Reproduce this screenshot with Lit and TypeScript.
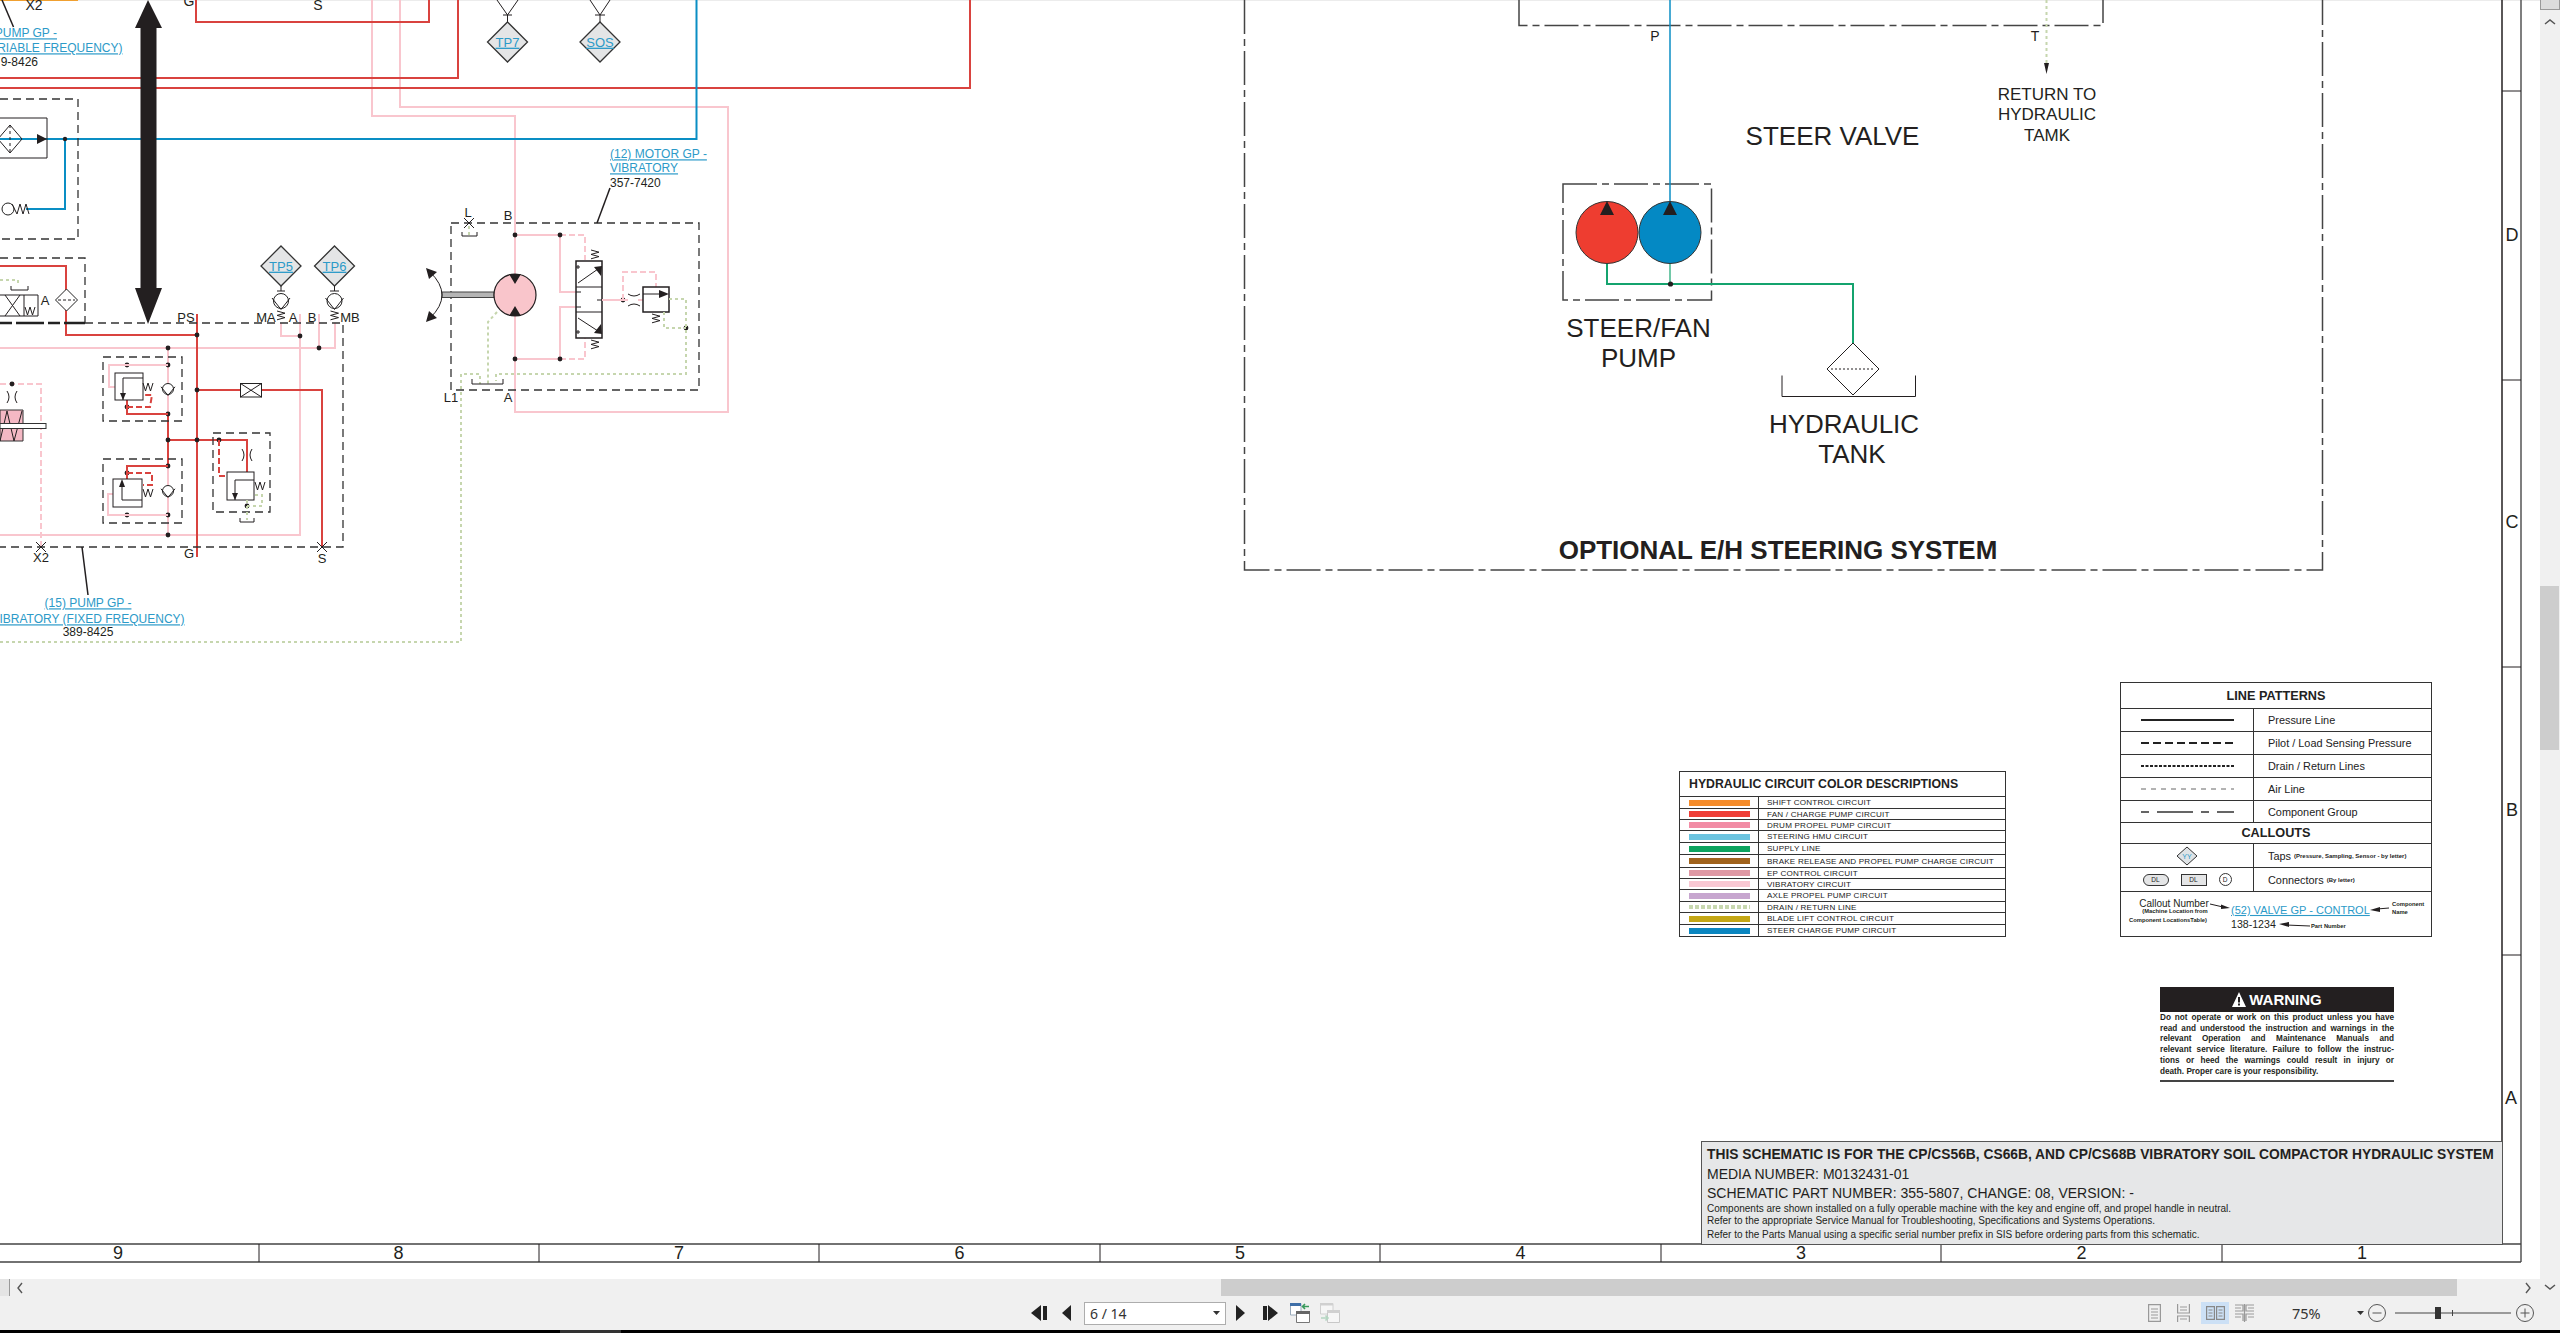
import { LitElement, html, svg, css } from 'lit';
import { customElement } from 'lit/decorators.js';

const COLORS = [
  { c: '#f58c2a', t: 'SHIFT CONTROL CIRCUIT', h: 12 },
  { c: '#ee3d36', t: 'FAN / CHARGE PUMP CIRCUIT', h: 11 },
  { c: '#f28ca5', t: 'DRUM PROPEL PUMP CIRCUIT', h: 11 },
  { c: '#6cc4e0', t: 'STEERING HMU CIRCUIT', h: 12 },
  { c: '#0da45f', t: 'SUPPLY LINE', h: 12 },
  { c: '#a0631c', t: 'BRAKE RELEASE AND PROPEL PUMP CHARGE CIRCUIT', h: 13 },
  { c: '#df98a4', t: 'EP CONTROL CIRCUIT', h: 11 },
  { c: '#f9c8d3', t: 'VIBRATORY CIRCUIT', h: 11 },
  { c: '#c7a6cf', t: 'AXLE PROPEL PUMP CIRCUIT', h: 12 },
  { c: 'dots', t: 'DRAIN / RETURN LINE', h: 11 },
  { c: '#c4a715', t: 'BLADE LIFT CONTROL CIRCUIT', h: 12 },
  { c: '#0a86c0', t: 'STEER CHARGE PUMP CIRCUIT', h: 11 },
];

const PATTERNS = [
  { label: 'Pressure Line', w: 2, dash: '', col: '#222' },
  { label: 'Pilot / Load Sensing Pressure', w: 2, dash: '8 4', col: '#222' },
  { label: 'Drain / Return Lines', w: 2, dash: '3 1.5', col: '#222' },
  { label: 'Air Line', w: 1, dash: '5 5', col: '#666' },
  { label: 'Component Group', w: 1.4, dash: '8 8 36 8 8 8 36 0', col: '#333' },
];

// text centred vertically on y, x is the anchor
const t = (x: number, y: number, s: string, size = 14, anchor = 'middle', cls = 'lb') =>
  svg`<text class=${cls} x=${x} y=${y + size * 0.36} font-size=${size} text-anchor=${anchor}>${s}</text>`;

const dots = (pts: number[][]) => pts.map(([x, y]) => svg`<circle class="dot" cx=${x} cy=${y} r="2.4"></circle>`);

const cross = (x: number, y: number, r = 5) =>
  svg`<path class="k" d="M${x - r} ${y - r}L${x + r} ${y + r}M${x + r} ${y - r}L${x - r} ${y + r}"></path>`;

// horizontal spring, looks like a small W
const springH = (x: number, y: number) =>
  svg`<path class="k" d="M${x} ${y - 4}l2.5 8l2.5 -8l2.5 8l2.5 -8"></path>`;
const springV = (x: number, y: number) =>
  svg`<path class="k" d="M${x - 4} ${y}l8 2.2l-8 2.2l8 2.2l-8 2.2"></path>`;

const checkValve = (x: number, y: number, r = 5.5) => svg`
  <circle cx=${x} cy=${y} r=${r} fill="#fff" stroke="#222" stroke-width="1"></circle>
  <path class="k" d="M${x - r - 1.5} ${y - r * 0.4}L${x} ${y + r + 1}L${x + r + 1.5} ${y - r * 0.4}"></path>`;

const tap = (x: number, y: number, label: string) => svg`
  <path d="M${x} ${y - 20}L${x + 20} ${y}L${x} ${y + 20}L${x - 20} ${y}Z" fill="#e4e5e6" stroke="#333" stroke-width="1.3"></path>
  ${t(x, y, label, 13, 'middle', 'lk ul')}`;

const orifice = (x: number, y: number) => svg`
  <path class="k" d="M${x - 5} ${y - 6}Q${x - 1} ${y} ${x - 5} ${y + 6}M${x + 5} ${y - 6}Q${x + 1} ${y} ${x + 5} ${y + 6}"></path>`;

@customElement('app-root')
export class AppRoot extends LitElement {
  static styles = css`
    :host {
      display: flex;
      flex-direction: column;
      width: 2560px;
      height: 1333px;
      overflow: hidden;
      background: #fff;
      font-family: 'Liberation Sans', Arial, sans-serif;
      color: #222;
    }

    .viewer {
      flex: 1;
      min-height: 0;
      display: grid;
      grid-template-columns: 1fr 20px;
      grid-template-rows: 1fr 17px;
    }

    .canvas { position: relative; overflow: hidden; background: #fff; }
    .canvas > svg { display: block; position: absolute; left: 0; top: 0; }

    .vbar {
      grid-row: 1 / span 2;
      grid-column: 2;
      background: #f0f0f0;
      display: flex;
      flex-direction: column;
      align-items: center;
    }
    .vbar .cap { width: 20px; height: 10px; box-sizing: border-box; background: #dcdcdc; border: 1px solid #999; border-top: 0; }
    .vbar .thumb { width: 19px; height: 164px; background: #cdcdcd; margin-top: 559px; margin-left: -1px; }
    .vbar .up { margin-top: 7px; height: 10px; }
    .vbar .down { margin-top: auto; margin-bottom: 4px; height: 10px; }

    .hbar { background: #f0f0f0; display: flex; align-items: center; }
    .hbar .cap { width: 10px; height: 18px; box-sizing: border-box; background: #e4e4e4; border-right: 1px solid #999; }
    .hbar .left { margin-left: 6px; }
    .hbar .thumb { width: 1236px; height: 17px; background: #cdcdcd; margin-left: 1197px; }
    .hbar .right { margin-left: 67px; }

    .toolbar {
      height: 34px;
      background: #f0f0f0;
      display: flex;
      align-items: center;
      font-family: 'Noto Sans', 'Open Sans', sans-serif;
      color: #333;
    }
    .toolbar svg { display: block; flex: none; }
    .first { margin-left: 1031px; }
    .prev { margin-left: 15px; }
    .page {
      margin-left: 13px;
      width: 142px;
      height: 23px;
      box-sizing: border-box;
      background: #fff;
      border: 1px solid #adadad;
      display: flex;
      align-items: center;
      justify-content: space-between;
      padding: 0 5px 0 5px;
      font-size: 14px;
    }
    .next { margin-left: 10px; }
    .last { margin-left: 18px; }
    .exp { margin-left: 12px; }
    .imp { margin-left: 10px; }
    .v1 { margin-left: 808px; }
    .v2 { margin-left: 16px; }
    .v3 { margin-left: 11px; background: #cce0f5; width: 28px; height: 22px; display: flex; align-items: center; justify-content: center; }
    .v4 { margin-left: 6px; }
    .zoom-val { margin-left: 38px; width: 30px; font-size: 14.5px; }
    .zoom-caret { margin-left: 35px; }
    .zoom-out { margin-left: 4px; }
    .slider { margin-left: 9px; }
    .zoom-in { margin-left: 5px; }

    .taskbar { height: 3px; background: #000; display: flex; }
    .taskbar span { width: 61px; margin-left: 560px; background: #333; }

    /* drawing */
    .lb { fill: #231f20; font-family: 'Liberation Sans', Arial, sans-serif; }
    .lk { fill: #2c9ac8; font-family: 'Liberation Sans', Arial, sans-serif; }
    .ul { text-decoration: underline; }
    .bold { font-weight: 700; }
    .k { fill: none; stroke: #231f20; stroke-width: 1; }
    .k2 { fill: none; stroke: #231f20; stroke-width: 1.5; }
    .grp2 { fill: none; stroke: #333; stroke-width: 1.3; stroke-dasharray: 8 5; }
    .frame { fill: none; stroke: #444; stroke-width: 1.5; stroke-dasharray: 34 5 7 5; }
    .red { fill: none; stroke: #d9433f; stroke-width: 2; }
    .redd { fill: none; stroke: #d9433f; stroke-width: 2; stroke-dasharray: 6 3; }
    .pink { fill: none; stroke: #f9c6ce; stroke-width: 2; }
    .pinkd { fill: none; stroke: #f9c6ce; stroke-width: 2; stroke-dasharray: 6 3; }
    .blue { fill: none; stroke: #0a8ec4; stroke-width: 2; }
    .grn { fill: none; stroke: #14a36e; stroke-width: 2; }
    .drain { fill: none; stroke: #c6d6ae; stroke-width: 2; stroke-dasharray: 3 3; }
    .dot { fill: #231f20; }
    .tip { fill: #231f20; }

    /* colour legend */
    .colors {
      position: absolute;
      left: 1679px;
      top: 771px;
      width: 327px;
      box-sizing: border-box;
      border: 1px solid #333;
    }
    .colors .head {
      height: 24px;
      padding-left: 9px;
      display: flex;
      align-items: center;
      font-size: 12.3px;
      font-weight: 700;
      border-bottom: 1px solid #333;
    }
    .colors .row {
      display: grid;
      grid-template-columns: 79px 1fr;
      align-items: stretch;
      border-bottom: 1px solid #333;
      box-sizing: border-box;
      font-size: 8.1px;
      letter-spacing: 0.2px;
    }
    .colors .row:last-child { border-bottom: 0; }
    .colors .swatch { display: flex; align-items: center; padding-left: 9px; border-right: 1px solid #333; }
    .colors .swatch i { display: block; width: 61px; height: 6px; }
    .colors .swatch i.dots { background: repeating-linear-gradient(90deg, #c8d8b0 0 4px, transparent 4px 6px); height: 4px; }
    .colors .name { padding-left: 8px; display: flex; align-items: center; }

    /* line pattern legend */
    .patterns {
      position: absolute;
      left: 2120px;
      top: 682px;
      width: 312px;
      box-sizing: border-box;
      border: 1px solid #333;
      display: grid;
      grid-template-columns: 133px 1fr;
      grid-template-rows: 26px 23px 23px 23px 23px 22px 21px 24px 24px 44px;
      font-size: 10.9px;
    }
    .patterns > div { border-bottom: 1px solid #333; display: flex; align-items: center; box-sizing: border-box; }
    .patterns .title { grid-column: 1 / span 2; justify-content: center; font-size: 12.7px; font-weight: 700; }
    .patterns .sample { justify-content: center; border-right: 1px solid #333; gap: 12px; }
    .patterns .desc { padding-left: 14px; white-space: pre; }
    .patterns .desc small { font-size: 6px; font-weight: 700; margin-left: 3px; }
    .patterns .callout { grid-column: 1 / span 2; border-bottom: 0; }
    .pill {
      width: 24px;
      height: 10px;
      border: 1px solid #333;
      border-radius: 6px;
      background: #e4e5e6;
      font-size: 6.5px;
      display: flex;
      align-items: center;
      justify-content: center;
    }
    .pill.box { border-radius: 0; width: 24px; }
    .pill.round { width: 11px; height: 11px; border-radius: 50%; background: #fff; }

    /* warning */
    .warning { position: absolute; left: 2160px; top: 987px; width: 234px; }
    .warning .bar {
      height: 25px;
      background: #231f20;
      color: #fff;
      display: flex;
      align-items: center;
      justify-content: center;
      gap: 3px;
      font-size: 15px;
      font-weight: 700;
    }
    .warning .body {
      padding: 1px 0 3px;
      font-size: 8.2px;
      line-height: 10.7px;
      font-weight: 700;
      border-bottom: 2px solid #444;
      color: #231f20;
    }
    .warning .body div { text-align: justify; text-align-last: justify; white-space: nowrap; }
    .warning .body div:last-child { text-align-last: left; }

    /* title block */
    .titleblock {
      position: absolute;
      left: 1701px;
      top: 1141px;
      width: 802px;
      height: 104px;
      box-sizing: border-box;
      border: 1.5px solid #555;
      background: #e6e7e8;
      padding-left: 5px;
      display: grid;
      grid-template-rows: 24px 16px 22px 8px 16px 12px;
      align-items: center;
      white-space: nowrap;
      color: #231f20;
    }
    .titleblock .h { font-size: 13.8px; font-weight: 700; }
    .titleblock .m { font-size: 14px; }
    .titleblock .s { font-size: 10px; }
  `;

  private drawing() {
    return svg`
      <path d="M0 .5H2540" stroke="#ececec"></path>

      <!-- left circuit lines, back to front -->
      <path class="pink" d="M372 0V116H515V412H728V107H400V0"></path>
      <path class="pink" d="M0 348H335V323M319 314V348M0 535H300V314M281 323V336H300M168 348V414M168 466V535"></path>
      <path class="pinkd" d="M0 384H41V547"></path>
      <path class="red" d="M196 0V22H429V0M0 78H458V0M0 88H970V0"></path>
      <path class="blue" d="M696.5 0V139H0M65 139V209H26"></path>
      <path class="red" d="M0 266H66V335H197M197 314V557M197 390H322V547M168 414V466M168 440H247V472"></path>

      <!-- upper left fragment -->
      <path d="M0 0H78" stroke="#f0a030" stroke-width="2"></path>
      <path class="k2" d="M2 0L13.5 27"></path>
      ${t(34, 5, 'X2', 14)}
      ${t(189, 1, 'G', 14)}
      ${t(318, 5, 'S', 14)}
      ${t(57, 33, 'PUMP GP -', 12, 'end', 'lk ul')}
      ${t(122.5, 48, 'RIABLE FREQUENCY)', 12, 'end', 'lk ul')}
      ${t(38, 62, '9-8426', 12, 'end')}

      <path class="grp2" d="M0 99H78V239H0"></path>
      <path class="k" d="M0 118H47V158H0"></path>
      <path class="k" fill="#fff" d="M10 125L22 139L10 153L-2 139Z"></path>
      <path class="k" stroke-dasharray="3 3" d="M10 125V153"></path>
      <path class="tip" d="M37 134L47 139L37 144Z"></path>
      <circle cx="65" cy="139" r="2.2" class="dot"></circle>
      <circle cx="8" cy="209" r="6" fill="#fff" stroke="#222"></circle>
      <path class="k" d="M12 204L17 214L20 204L23 214L26 204L29 214"></path>

      <path class="grp2" d="M0 258H85V323"></path>
      <path d="M0 323H85" stroke="#222" stroke-width="2.5" stroke-dasharray="12 4 28 4"></path>
      <path class="drain" d="M0 280H18V286"></path>
      <path class="k" d="M11 286V290H28V286"></path>
      <path class="k" fill="#fff" d="M0 295H38V316H0M24 295V316M5 295L20 316M20 295L5 316"></path>
      ${t(45, 300, 'A', 13)}
      ${springH(25, 311)}
      <path fill="#fff" stroke="#222" d="M66.5 289L77.5 300L66.5 311L55.5 300Z"></path>
      <path class="k" stroke-dasharray="3 2" d="M58 300H75"></path>

      <!-- drive arrow -->
      <path class="tip" d="M148 0L162 28H156.5V288H162L148 324L135 288H140.5V28H135Z"></path>

      <!-- test points -->
      <path class="k" d="M507.5 22V15M503 15H512M507.5 15L497 0M507.5 15L518 0M600 22V15M595 15H605M600 15L590 0M600 15L610 0"></path>
      ${tap(507.5, 42, 'TP7')}
      ${tap(600, 42, 'SOS')}
      ${tap(281, 266, 'TP5')}
      ${tap(334.5, 266, 'TP6')}
      <path class="k" d="M281 286V291M277 291H285M334.5 286V291M330 291H339"></path>
      ${checkValve(281, 301, 7.5)}
      ${checkValve(334.5, 301, 7.5)}
      ${springV(281, 311)}
      ${springV(334.5, 311)}

      <!-- pump group -->
      <path class="grp2" d="M85 323H343V547H0"></path>
      ${t(186, 317, 'PS', 13)}
      ${t(266, 317, 'MA', 13)}
      ${t(293, 317, 'A', 13)}
      ${t(312, 317, 'B', 13)}
      ${t(350, 317, 'MB', 13)}
      ${t(189, 553, 'G', 13)}
      ${t(41, 557, 'X2', 13)}
      ${t(322, 558, 'S', 13)}
      ${cross(41, 547)}
      ${cross(322, 547)}
      ${dots([[197, 335], [197, 390], [197, 440], [168, 440], [168, 348], [168, 365], [168, 414], [168, 466], [168, 515], [168, 535], [300, 336], [319, 348], [12, 384], [127, 365], [127, 407], [127, 473], [127, 515], [219, 440], [247, 506]])}
      <rect x="240.5" y="383.5" width="21" height="13.5" fill="#fff" stroke="#222"></rect>
      <path class="k" d="M240.5 383.5L261.5 397M261.5 383.5L240.5 397"></path>

      <path class="grp2" d="M103 357H182V421H103Z"></path>
      <path class="pink" d="M168 365H109V387H115"></path>
      <path class="red" d="M168 414H127V400"></path>
      <path class="redd" d="M127 407H150L152 395H143"></path>
      <rect class="k" x="115" y="373" width="28" height="27"></rect>
      <path class="k" d="M143 378H123V400"></path>
      <path class="tip" d="M120 393H126L123 400Z"></path>
      ${springH(143, 387)}
      ${checkValve(168, 389)}

      <path class="grp2" d="M103 459H182V523H103Z"></path>
      <path class="pink" d="M168 515H108V494H113"></path>
      <path class="red" d="M168 466H127V479"></path>
      <path class="redd" d="M127 473H152V485H143"></path>
      <rect class="k" x="113" y="479" width="29" height="28"></rect>
      <path class="k" d="M122 484V500H142"></path>
      <path class="tip" d="M119 487H125L122 479Z"></path>
      ${springH(143, 493)}
      ${checkValve(168, 491)}

      <path class="grp2" d="M213 433H270V512H213Z"></path>
      <path class="redd" d="M219 440V476H227"></path>
      <rect class="k" x="227" y="472" width="27" height="28"></rect>
      <path class="k" d="M254 480H235V500"></path>
      <path class="tip" d="M232 493H238L235 500Z"></path>
      ${orifice(247, 455)}
      ${springH(255, 486)}
      <path class="drain" d="M247 500V520M247 506H262V495H254"></path>
      <path class="k" d="M240 518V522H254V518"></path>

      <path fill="#f4b8c4" stroke="#333" d="M0 410H23V441H0Z"></path>
      <path class="k" d="M0 441L7 411L14 441L22 411"></path>
      <rect x="0" y="423.5" width="46" height="5" fill="#fff" stroke="#333"></rect>
      ${orifice(12, 397)}

      <path class="k2" d="M82 547L88 595"></path>
      ${t(88, 603, '(15) PUMP GP -', 12, 'middle', 'lk ul')}
      ${t(88, 619, 'VIBRATORY (FIXED FREQUENCY)', 12, 'middle', 'lk ul')}
      ${t(88, 632, '389-8425', 12)}
      <path class="drain" d="M0 642H461V374H480V384"></path>

      <!-- vibratory motor -->
      <path class="grp2" d="M451 223H699V390H451Z"></path>
      <path class="k2" d="M610 188L597 223"></path>
      ${t(610, 154, '(12) MOTOR GP -', 12, 'start', 'lk ul')}
      ${t(610, 168, 'VIBRATORY', 12, 'start', 'lk ul')}
      ${t(610, 183, '357-7420', 12, 'start')}
      ${t(468, 212, 'L', 13)}
      ${t(508, 215, 'B', 13)}
      ${t(508, 397, 'A', 13)}
      ${t(451, 397, 'L1', 13)}
      ${cross(469, 223)}
      <path class="drain" d="M469 226V236"></path>
      <path class="k" d="M462 232V236H477V232"></path>

      <path class="pink" d="M515 235H560V292H576M515 359H560V307H576"></path>
      <path class="pinkd" d="M560 235H585V260M560 359H585V338"></path>
      ${dots([[515, 235], [560, 235], [515, 359], [560, 359], [623, 300], [686, 328]])}
      <rect x="442" y="292" width="52" height="5.5" fill="#b5b5b5" stroke="#444"></rect>
      <path class="k" d="M430 272Q454 295 430 318"></path>
      <path class="tip" d="M426 268L437 272L429 279ZM426 322L437 318L429 311Z"></path>
      <circle cx="515" cy="295" r="21" fill="#f9c5cb" stroke="#231f20" stroke-width="1.2"></circle>
      <path class="tip" d="M509 274H521L515 284ZM509 316H521L515 306Z"></path>

      <path class="k2" fill="#fff" d="M576 261H602V338H576Z"></path>
      <path class="k" d="M576 287H602M576 312H602"></path>
      <path class="k" d="M578 283L598 269M578 318L598 331M576 267H580M578 265V269M576 332H580M578 330V334M576 292H581M576 307H581M602 300H597"></path>
      <path class="tip" d="M602 266L601 276L594 267ZM602 334L601 324L594 333Z"></path>
      ${springV(595, 250)}
      ${springV(595, 340)}
      <path class="pink" d="M602 300H628M638 300H643"></path>
      <path class="pinkd" d="M623 300V272H656V287"></path>
      <path class="k" d="M628 294Q634 298 640 294M628 306Q634 302 640 306"></path>
      <rect class="k2" x="643" y="287" width="26" height="25" fill="#fff"></rect>
      <path class="k" d="M643 294H660"></path>
      <path class="tip" d="M669 294L659 290V298Z"></path>
      ${springV(656, 314)}
      <path class="drain" d="M669 299H686V374H496V381M664 312V328H686"></path>
      <path class="drain" d="M497 312L488 322V384"></path>
      <path class="k" d="M472 379V384H503V379"></path>

      <!-- optional steering system -->
      <path class="frame" d="M1244.5 0V570H2322.5V0"></path>
      <path class="frame" d="M1519 0V25.5H2103V0"></path>
      ${t(1655, 36, 'P', 14)}
      ${t(2035, 36, 'T', 14)}
      <path class="drain" stroke-width="1.5" d="M2046.5 0V63"></path>
      <path class="tip" d="M2044 63H2049L2046.5 74Z"></path>
      ${t(2047, 94, 'RETURN TO', 17)}
      ${t(2047, 114, 'HYDRAULIC', 17)}
      ${t(2047, 135, 'TAMK', 17)}
      ${t(1832.5, 136, 'STEER VALVE', 26)}
      <path class="frame" d="M1563 184H1711.5V300H1563Z"></path>
      <path d="M1670 0V201" stroke="#0a8ec4" stroke-width="1.5"></path>
      <circle cx="1607" cy="232.5" r="31" fill="#ee3d30" stroke="#333"></circle>
      <circle cx="1670" cy="232.5" r="31" fill="#0489c4" stroke="#333"></circle>
      <path class="tip" d="M1607 201L1614 215H1600ZM1670 201L1677 215H1663Z"></path>
      <path class="grn" d="M1607 264V284H1853V343"></path>
      <path d="M1670 264V284" stroke="#14a36e" stroke-width="1.2"></path>
      <circle cx="1670.5" cy="284" r="2.6" class="dot"></circle>
      <path class="k" d="M1853 343L1879 369L1853 395L1827 369Z"></path>
      <path class="k" stroke-dasharray="2 2" d="M1831 369H1875"></path>
      <path class="k" d="M1782 375.5V396.5H1915.5V375.5"></path>
      ${t(1638.5, 328, 'STEER/FAN', 26)}
      ${t(1638.5, 358, 'PUMP', 26)}
      ${t(1844, 424, 'HYDRAULIC', 26)}
      ${t(1852, 454, 'TANK', 26)}
      ${t(1778, 550, 'OPTIONAL E/H STEERING SYSTEM', 26, 'middle', 'lb bold')}

      <!-- sheet frame -->
      <path class="k2" d="M2502 0V1244"></path>
      <path d="M2521 0V1262" stroke="#555" stroke-width="1.5" fill="none"></path>
      <path class="k" d="M2502 91H2521M2502 380H2521M2502 667H2521M2502 955H2521"></path>
      ${t(2512, 235, 'D', 18)}
      ${t(2512, 522, 'C', 18)}
      ${t(2512, 810, 'B', 18)}
      ${t(2511, 1098, 'A', 18)}
      <path d="M0 1244H2521M0 1262H2521" stroke="#444" stroke-width="1.6" fill="none"></path>
      ${[259, 539, 819, 1100, 1380, 1661, 1941, 2222].map(x => svg`<path class="k" d="M${x} 1244V1262"></path>`)}
      ${['9', '8', '7', '6', '5', '4', '3', '2', '1'].map((n, i) => t(118 + i * 280.5, 1253, n, 18))}
    `;
  }

  private callout() {
    return html`<svg width="310" height="44" viewBox="0 0 310 44">
      ${t(53, 11, 'Callout Number', 10)}
      ${t(54, 19, '(Machine Location from', 5.8, 'middle', 'lb bold')}
      ${t(47, 28, 'Component LocationsTable)', 5.8, 'middle', 'lb bold')}
      <path class="k" d="M89 12L102 15"></path>
      <path class="tip" d="M109 16L100 12.5V17Z"></path>
      ${t(110, 18, '(52) VALVE GP - CONTROL', 11, 'start', 'lk ul')}
      ${t(110, 32, '138-1234', 10.6, 'start')}
      <path class="k" d="M165 33L189 34"></path>
      <path class="tip" d="M158 32L168 30V35Z"></path>
      ${t(190, 34, 'Part Number', 5.8, 'start', 'lb bold')}
      <path class="k" d="M256 17L268 16"></path>
      <path class="tip" d="M249 18L259 15V20Z"></path>
      ${t(271, 12, 'Component', 5.8, 'start', 'lb bold')}
      ${t(271, 20, 'Name', 5.8, 'start', 'lb bold')}
    </svg>`;
  }

  private toolbar() {
    return html`<div class="toolbar">
      <svg class="first" width="16" height="16" viewBox="0 0 16 16"><path d="M10 0V16L0 8ZM12 1H16V15H12Z" fill="#222"></path></svg>
      <svg class="prev" width="9" height="16" viewBox="0 0 9 16"><path d="M9 0V16L0 8Z" fill="#222"></path></svg>
      <div class="page"><span>6 / 14</span><svg width="7" height="4" viewBox="0 0 7 4"><path d="M0 0H7L3.5 4Z" fill="#333"></path></svg></div>
      <svg class="next" width="9" height="16" viewBox="0 0 9 16"><path d="M0 0V16L9 8Z" fill="#222"></path></svg>
      <svg class="last" width="15" height="16" viewBox="0 0 15 16"><path d="M0 1H4V15H0ZM5 0V16L15 8Z" fill="#222"></path></svg>
      <svg class="exp" width="20" height="20" viewBox="0 0 20 20">
        <path d="M.5.5H11V12H.5Z" fill="#fff" stroke="#9ab"></path><path d="M0 0H11V3H0Z" fill="#3f6fa8"></path>
        <path d="M6.5 8.5H19.5V19.5H6.5Z" fill="#fff" stroke="#777"></path><path d="M6 8H20V11H6Z" fill="#666"></path>
        <path d="M19 3.5H13M15 1L12.5 3.5L15 6" fill="none" stroke="#3a9a5c" stroke-width="1.6"></path>
      </svg>
      <svg class="imp" width="20" height="20" viewBox="0 0 20 20" opacity=".45">
        <path d="M.5.5H13V11H.5Z" fill="#fff" stroke="#aaa"></path><path d="M0 0H13V2.5H0Z" fill="#aaa"></path>
        <path d="M7.5 7.5H19.5V19.5H7.5Z" fill="#fff" stroke="#999"></path><path d="M7 7H20V10H7Z" fill="#aaa"></path>
        <path d="M1 15H8M5.5 12.5L8 15L5.5 17.5" fill="none" stroke="#6db88a" stroke-width="1.6"></path>
      </svg>
      <svg class="v1" width="13" height="18" viewBox="0 0 13 18" fill="none" stroke="#999" stroke-width="1.2"><path d="M.6.6H12.4V17.4H.6ZM3 5H10M3 8H10M3 11H10M3 14H10"></path></svg>
      <svg class="v2" width="13" height="18" viewBox="0 0 13 18" fill="none" stroke="#999" stroke-width="1.2"><path d="M.6 0V9H12.4V0M3 3H10M3 6H10M.6 18V12H12.4V18M3 15H10"></path></svg>
      <div class="v3"><svg width="19" height="14" viewBox="0 0 19 14" fill="none" stroke="#888" stroke-width="1.2"><path d="M.6.6H8.4V13.4H.6ZM10.6.6H18.4V13.4H10.6ZM2.5 4H6.5M2.5 7H6.5M2.5 10H6.5M12.5 4H16.5M12.5 7H16.5M12.5 10H16.5"></path></svg></div>
      <svg class="v4" width="19" height="18" viewBox="0 0 19 18" fill="none" stroke="#999" stroke-width="1.2"><path d="M0 1H8V7H0M0 4H6M19 1H11V7H19M19 4H13M0 10H8V17M0 13H6M19 10H11V17M19 13H13M9.5 0V18"></path></svg>
      <div class="zoom-val">75%</div>
      <svg class="zoom-caret" width="7" height="4" viewBox="0 0 7 4"><path d="M0 0H7L3.5 4Z" fill="#333"></path></svg>
      <svg class="zoom-out" width="18" height="18" viewBox="0 0 18 18" fill="none" stroke="#555"><circle cx="9" cy="9" r="8.5"></circle><path d="M4.5 9H13.5"></path></svg>
      <svg class="slider" width="116" height="14" viewBox="0 0 116 14"><path d="M0 7H116M57.5 4V10" stroke="#444" fill="none"></path><rect x="40" y="1" width="6" height="12" fill="#333"></rect></svg>
      <svg class="zoom-in" width="18" height="18" viewBox="0 0 18 18" fill="none" stroke="#555"><circle cx="9" cy="9" r="8.5"></circle><path d="M4.5 9H13.5M9 4.5V13.5"></path></svg>
    </div>`;
  }

  render() {
    return html`
      <div class="viewer">
        <div class="canvas">
          <svg width="2540" height="1279" viewBox="0 0 2540 1279">${this.drawing()}</svg>

          <div class="colors">
            <div class="head">HYDRAULIC CIRCUIT COLOR DESCRIPTIONS</div>
            ${COLORS.map(r => html`<div class="row" style="height:${r.h}px">
              <div class="swatch">${r.c === 'dots'
                ? html`<i class="dots"></i>`
                : html`<i style="background:${r.c}"></i>`}</div>
              <div class="name">${r.t}</div>
            </div>`)}
          </div>

          <div class="patterns">
            <div class="title">LINE PATTERNS</div>
            ${PATTERNS.map(p => html`
              <div class="sample"><svg width="93" height="4" viewBox="0 0 93 4"><path d="M0 2H93" stroke=${p.col} stroke-width=${p.w} stroke-dasharray=${p.dash}></path></svg></div>
              <div class="desc">${p.label}</div>`)}
            <div class="title">CALLOUTS</div>
            <div class="sample"><svg width="22" height="20" viewBox="0 0 22 20">
              <path d="M11 1L21 10L11 19L1 10Z" fill="#dfe3e6" stroke="#333"></path>
              ${t(11, 10, 'YY', 7, 'middle', 'lk')}
            </svg></div>
            <div class="desc">Taps<small>(Pressure, Sampling, Sensor - by letter)</small></div>
            <div class="sample">
              <span class="pill">DL</span><span class="pill box">DL</span><span class="pill round">D</span>
            </div>
            <div class="desc">Connectors<small>(By letter)</small></div>
            <div class="callout">${this.callout()}</div>
          </div>

          <div class="warning">
            <div class="bar">
              <svg width="14" height="15" viewBox="0 0 14 15"><path d="M7 0L14 15H0Z" fill="#fff"></path><path d="M6 5H8V10.5H6ZM6 11.5H8V13.5H6Z" fill="#231f20"></path></svg>
              WARNING
            </div>
            <div class="body">
              <div>Do not operate or work on this product unless you have</div>
              <div>read and understood the instruction and warnings in the</div>
              <div>relevant Operation and Maintenance Manuals and</div>
              <div>relevant service literature. Failure to follow the instruc-</div>
              <div>tions or heed the warnings could result in injury or</div>
              <div>death. Proper care is your responsibility.</div>
            </div>
          </div>

          <div class="titleblock">
            <div class="h">THIS SCHEMATIC IS FOR THE CP/CS56B, CS66B, AND CP/CS68B VIBRATORY SOIL COMPACTOR HYDRAULIC SYSTEM</div>
            <div class="m">MEDIA NUMBER: M0132431-01</div>
            <div class="m">SCHEMATIC PART NUMBER: 355-5807, CHANGE: 08, VERSION: -</div>
            <div class="s">Components are shown installed on a fully operable machine with the key and engine off, and propel handle in neutral.</div>
            <div class="s">Refer to the appropriate Service Manual for Troubleshooting, Specifications and Systems Operations.</div>
            <div class="s">Refer to the Parts Manual using a specific serial number prefix in SIS before ordering parts from this schematic.</div>
          </div>
        </div>

        <div class="vbar">
          <div class="cap"></div>
          <svg class="up" width="12" height="10" viewBox="0 0 12 10"><path d="M1 7L6 3L11 7" fill="none" stroke="#555" stroke-width="1.5"></path></svg>
          <div class="thumb"></div>
          <svg class="down" width="12" height="10" viewBox="0 0 12 10"><path d="M1 3L6 7L11 3" fill="none" stroke="#555" stroke-width="1.5"></path></svg>
        </div>

        <div class="hbar">
          <div class="cap"></div>
          <svg class="left" width="8" height="12" viewBox="0 0 8 12"><path d="M6 1L2 6L6 11" fill="none" stroke="#555" stroke-width="1.4"></path></svg>
          <div class="thumb"></div>
          <svg class="right" width="8" height="12" viewBox="0 0 8 12"><path d="M2 1L6 6L2 11" fill="none" stroke="#555" stroke-width="1.4"></path></svg>
        </div>
      </div>
      ${this.toolbar()}
      <div class="taskbar"><span></span></div>
    `;
  }
}

declare global {
  interface HTMLElementTagNameMap { 'app-root': AppRoot; }
}
